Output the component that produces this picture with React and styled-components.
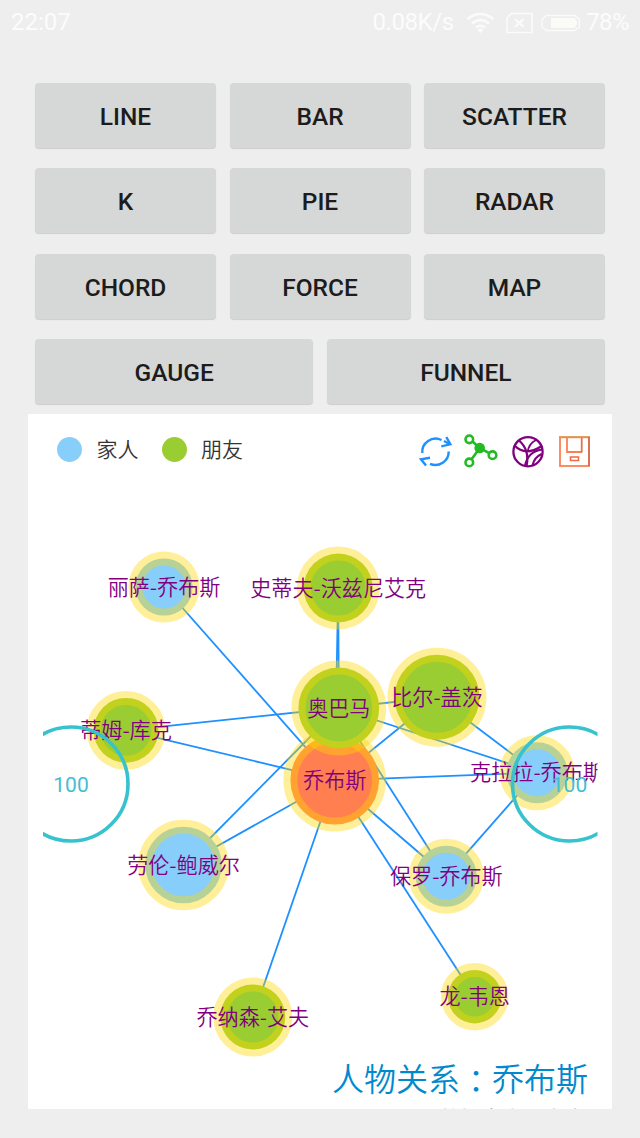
import React from "react";
import styled, { createGlobalStyle } from "styled-components";

const GlobalStyle = createGlobalStyle`
  html, body { margin: 0; background: #eeeeee; }
  body { font-family: Roboto, "Noto Sans CJK SC", sans-serif; }
`;

const Screen = styled.div`
  width: 640px;
  height: 1138px;
  overflow: hidden;
  background: #eeeeee;
`;

const StatusBar = styled.header`
  height: 45px;
  padding: 0 11px;
  display: flex;
  align-items: center;
  color: #fcfcfc;
  font-size: 24px;
  line-height: 47px;
`;

const NetSpeed = styled.span`
  margin-left: auto;
  margin-right: 12px;
  letter-spacing: -0.4px;
`;

const StatusIcons = styled.svg`
  display: block;
  margin-right: 6.5px;
`;

const Battery = styled.span`
  letter-spacing: -0.6px;
`;

const ButtonPanel = styled.section`
  padding: 38px 35px 0;
  display: flex;
  flex-direction: column;
  gap: 20.33px;
`;

const ButtonRow = styled.div`
  display: grid;
  grid-template-columns: repeat(${(p) => p.$columns}, 1fr);
  gap: 13.5px;
`;

const ChartButton = styled.button`
  height: 65px;
  padding: 1px 0 0;
  border: 0;
  border-radius: 4px;
  background: #d6d7d7;
  box-shadow: 0 1px 1px rgba(0, 0, 0, 0.14);
  color: #1c1c1c;
  font: 500 24.5px/65px Roboto, sans-serif;
`;

const ChartCard = styled.main`
  width: 584px;
  height: 695px;
  margin: 10px 28px 0;
  overflow: hidden;
  background: #ffffff;
`;

const ChartHeader = styled.div`
  height: 74px;
  display: flex;
  padding: 0 21px 0 29px;
  box-sizing: border-box;
  justify-content: space-between;
`;

const Legend = styled.div`
  height: 72px;
  display: flex;
  align-items: center;
  gap: 23px;
`;

const LegendItem = styled.div`
  display: flex;
  align-items: center;
  gap: 14.5px;
  font: 350 21px/30px "Noto Sans CJK SC", sans-serif;
  color: #333333;
`;

const LegendText = styled.span`
  padding-bottom: 3px;
`;

const LegendDot = styled.i`
  width: 25px;
  height: 25px;
  border-radius: 50%;
  background: ${(p) => p.$color};
`;

const Toolbox = styled.svg`
  display: block;
`;

const Graph = styled.svg`
  display: block;
`;

const NodeLabel = styled.text`
  font: 350 21.1px "Noto Sans CJK SC", sans-serif;
  fill: #800080;
  text-anchor: middle;
`;

const GaugeLabel = styled.text`
  font: 21px Roboto, sans-serif;
  fill: #45bdd0;
  text-anchor: middle;
`;

const Caption = styled.footer`
  padding-right: 24px;
  text-align: right;
`;

const Title = styled.h1`
  margin: 0;
  height: 44px;
  font: 350 32px/38px "Noto Sans CJK SC", sans-serif;
  color: #008acd;
`;

const FullColon = styled.span`
  font-family: "Noto Sans CJK TC", sans-serif;
  line-height: 1;
  vertical-align: -2px;
`;

const Subtitle = styled.p`
  margin: 0;
  padding-right: 2px;
  font: 350 21px/30px "Noto Sans CJK SC", sans-serif;
  color: #aaaaaa;
`;

const BUTTONS = [
  ["LINE", "BAR", "SCATTER"],
  ["K", "PIE", "RADAR"],
  ["CHORD", "FORCE", "MAP"],
  ["GAUGE", "FUNNEL"],
];

const MAIN = "#ff7f50";
const FAMILY = "#87cefa";
const FRIEND = "#9acd32";

const NODES = [
  { id: "jobs", name: "乔布斯", x: 334.7, y: 780.3, r: 44.3, color: MAIN },
  { id: "lisa", name: "丽萨-乔布斯", x: 164, y: 587, r: 28.6, color: FAMILY },
  { id: "paul", name: "保罗-乔布斯", x: 446.3, y: 876.2, r: 30.5, color: FAMILY },
  { id: "clara", name: "克拉拉-乔布斯", x: 537, y: 772.7, r: 30.5, color: FAMILY },
  { id: "lauren", name: "劳伦-鲍威尔", x: 183.5, y: 865, r: 38.3, color: FAMILY },
  { id: "steve", name: "史蒂夫-沃兹尼艾克", x: 338.2, y: 588, r: 34.5, color: FRIEND },
  { id: "obama", name: "奥巴马", x: 338.8, y: 708, r: 40.4, color: FRIEND },
  { id: "bill", name: "比尔-盖茨", x: 437, y: 697.3, r: 42.5, color: FRIEND },
  { id: "jony", name: "乔纳森-艾夫", x: 252.8, y: 1017, r: 32.5, color: FRIEND },
  { id: "tim", name: "蒂姆-库克", x: 126, y: 730.3, r: 32.4, color: FRIEND },
  { id: "wayne", name: "龙-韦恩", x: 474.7, y: 996.7, r: 26.7, color: FRIEND },
];

const LINKS = [
  ["lisa", "jobs"], ["paul", "jobs"], ["clara", "jobs"], ["lauren", "jobs"],
  ["steve", "jobs"], ["obama", "jobs"], ["bill", "jobs"], ["jony", "jobs"],
  ["tim", "jobs"], ["wayne", "jobs"], ["clara", "paul"], ["paul", "obama"],
  ["clara", "obama"], ["clara", "bill"], ["lauren", "obama"],
  ["steve", "obama"], ["bill", "obama"], ["tim", "obama"],
];

const byId = Object.fromEntries(NODES.map((n) => [n.id, n]));

function StatusGlyphs() {
  return (
    <StatusIcons width="114" height="24" viewBox="465.5 10 114 24" fill="none" stroke="#fbfbfa">
      <g strokeWidth="2.6">
        <path d="M467 18 Q480 8 493 18" />
        <path d="M471.5 22.5 Q480 15.5 488.5 22.5" />
        <path d="M475.5 26.5 Q480 23 484.5 26.5" />
      </g>
      <path d="M477 29 L480 27 L483 29 L480 32 Z" fill="#fbfbfa" stroke="none" />
      <path d="M511 12.5 H531.5 V31.5 H506.5 V17 Z" strokeWidth="1.5" />
      <path d="M514.5 18 L523 26 M523 18 L514.5 26" strokeWidth="2" />
      <path d="M546 14.5 H574 L579 18.5 V26 L574 29.5 H546 L541.5 26 V18.5 Z" strokeWidth="1.3" />
      <path d="M550.5 17 H574 Q579 22 574 27 H550.5 Z" fill="#fbfbf7" stroke="none" />
    </StatusIcons>
  );
}

function ToolIcons() {
  return (
    <Toolbox width="175" height="74" viewBox="416 414 175 74" fill="none">
      <g stroke="#1e90ff" strokeWidth="2.4">
        <path d="M422.3 453 A13.3 13.3 0 0 1 441.5 440" />
        <path d="M448.7 451.5 A13.3 13.3 0 0 1 430 463.8" />
        <path d="M446.3 437 L450.3 444.3 L441.3 446.3" />
        <path d="M444 441 L450 444.3" />
        <path d="M430 457.8 L421 459.3 L426 465.5" />
      </g>
      <g stroke="#22bb22" strokeWidth="2.6">
        <path d="M472.8 441.8 L479.7 448 L489.2 453.2 M479.7 448 L471.8 459" />
        <circle cx="469.3" cy="439.3" r="3.8" />
        <circle cx="492.5" cy="455.2" r="3.8" />
        <circle cx="469.3" cy="462.4" r="3.8" />
        <circle cx="479.7" cy="448" r="4" fill="#22bb22" />
      </g>
      <g stroke="#800080" strokeWidth="2.3">
        <circle cx="528" cy="451.7" r="14.6" />
        <path d="M519 440.5 Q530 450 526.5 466" />
        <path d="M514.5 445.5 Q525 456.5 541 446.5" />
        <path d="M536 440 Q528.5 444 527.7 452" strokeWidth="1.8" />
        <path d="M525 465.5 Q528 451.5 542 449.5" strokeWidth="2" />
        <path d="M532.5 465.5 Q534 457.5 541.5 454" strokeWidth="2" />
      </g>
      <g strokeWidth="1.8">
        <rect x="560" y="437.3" width="29" height="28.7" stroke={MAIN} />
        <path d="M559 437 H590" stroke="#d99a55" strokeWidth="1.5" />
        <path d="M589 437 V466" stroke="#d0694c" strokeWidth="1.5" />
        <path d="M567 438 V452 H582" stroke={MAIN} />
        <path d="M581.7 438 V452.5" stroke="#e0744e" />
        <rect x="570.5" y="457" width="8" height="3.5" stroke="#ee6a48" strokeWidth="1.5" />
      </g>
    </Toolbox>
  );
}

function RelationGraph() {
  return (
    <Graph width="584" height="570" viewBox="28 488 584 570">
      <clipPath id="plot">
        <rect x="43" y="488" width="554.5" height="570" />
      </clipPath>
      <g clipPath="url(#plot)">
        <g stroke="#1e90ff" strokeWidth="1.8">
          {LINKS.map(([a, b]) => (
            <line key={a + b} x1={byId[a].x} y1={byId[a].y} x2={byId[b].x} y2={byId[b].y} />
          ))}
        </g>
        {NODES.map((n) => (
          <g key={n.id}>
            <circle cx={n.x} cy={n.y} r={n.r} fill={n.color} stroke="#ffd700" strokeOpacity="0.4" strokeWidth="14" />
            <NodeLabel x={n.x} y={n.y + 7.5}>{n.name}</NodeLabel>
          </g>
        ))}
        {[71, 569.5].map((x) => (
          <g key={x}>
            <circle cx={x} cy="784" r="57" fill="none" stroke="#36c2cf" strokeWidth="3.6" />
            <GaugeLabel x={x} y="791.5">100</GaugeLabel>
          </g>
        ))}
      </g>
    </Graph>
  );
}

export default function App() {
  return (
    <Screen>
      <GlobalStyle />
      <StatusBar>
        <span>22:07</span>
        <NetSpeed>0.08K/s</NetSpeed>
        <StatusGlyphs />
        <Battery>78%</Battery>
      </StatusBar>
      <ButtonPanel>
        {BUTTONS.map((row) => (
          <ButtonRow key={row[0]} $columns={row.length}>
            {row.map((label) => (
              <ChartButton key={label}>{label}</ChartButton>
            ))}
          </ButtonRow>
        ))}
      </ButtonPanel>
      <ChartCard>
        <ChartHeader>
          <Legend>
            <LegendItem><LegendDot $color={FAMILY} /><LegendText>家人</LegendText></LegendItem>
            <LegendItem><LegendDot $color={FRIEND} /><LegendText>朋友</LegendText></LegendItem>
          </Legend>
          <ToolIcons />
        </ChartHeader>
        <RelationGraph />
        <Caption>
          <Title>人物关系<FullColon>：</FullColon>乔布斯</Title>
          <Subtitle>数据来自人立方</Subtitle>
        </Caption>
      </ChartCard>
    </Screen>
  );
}
